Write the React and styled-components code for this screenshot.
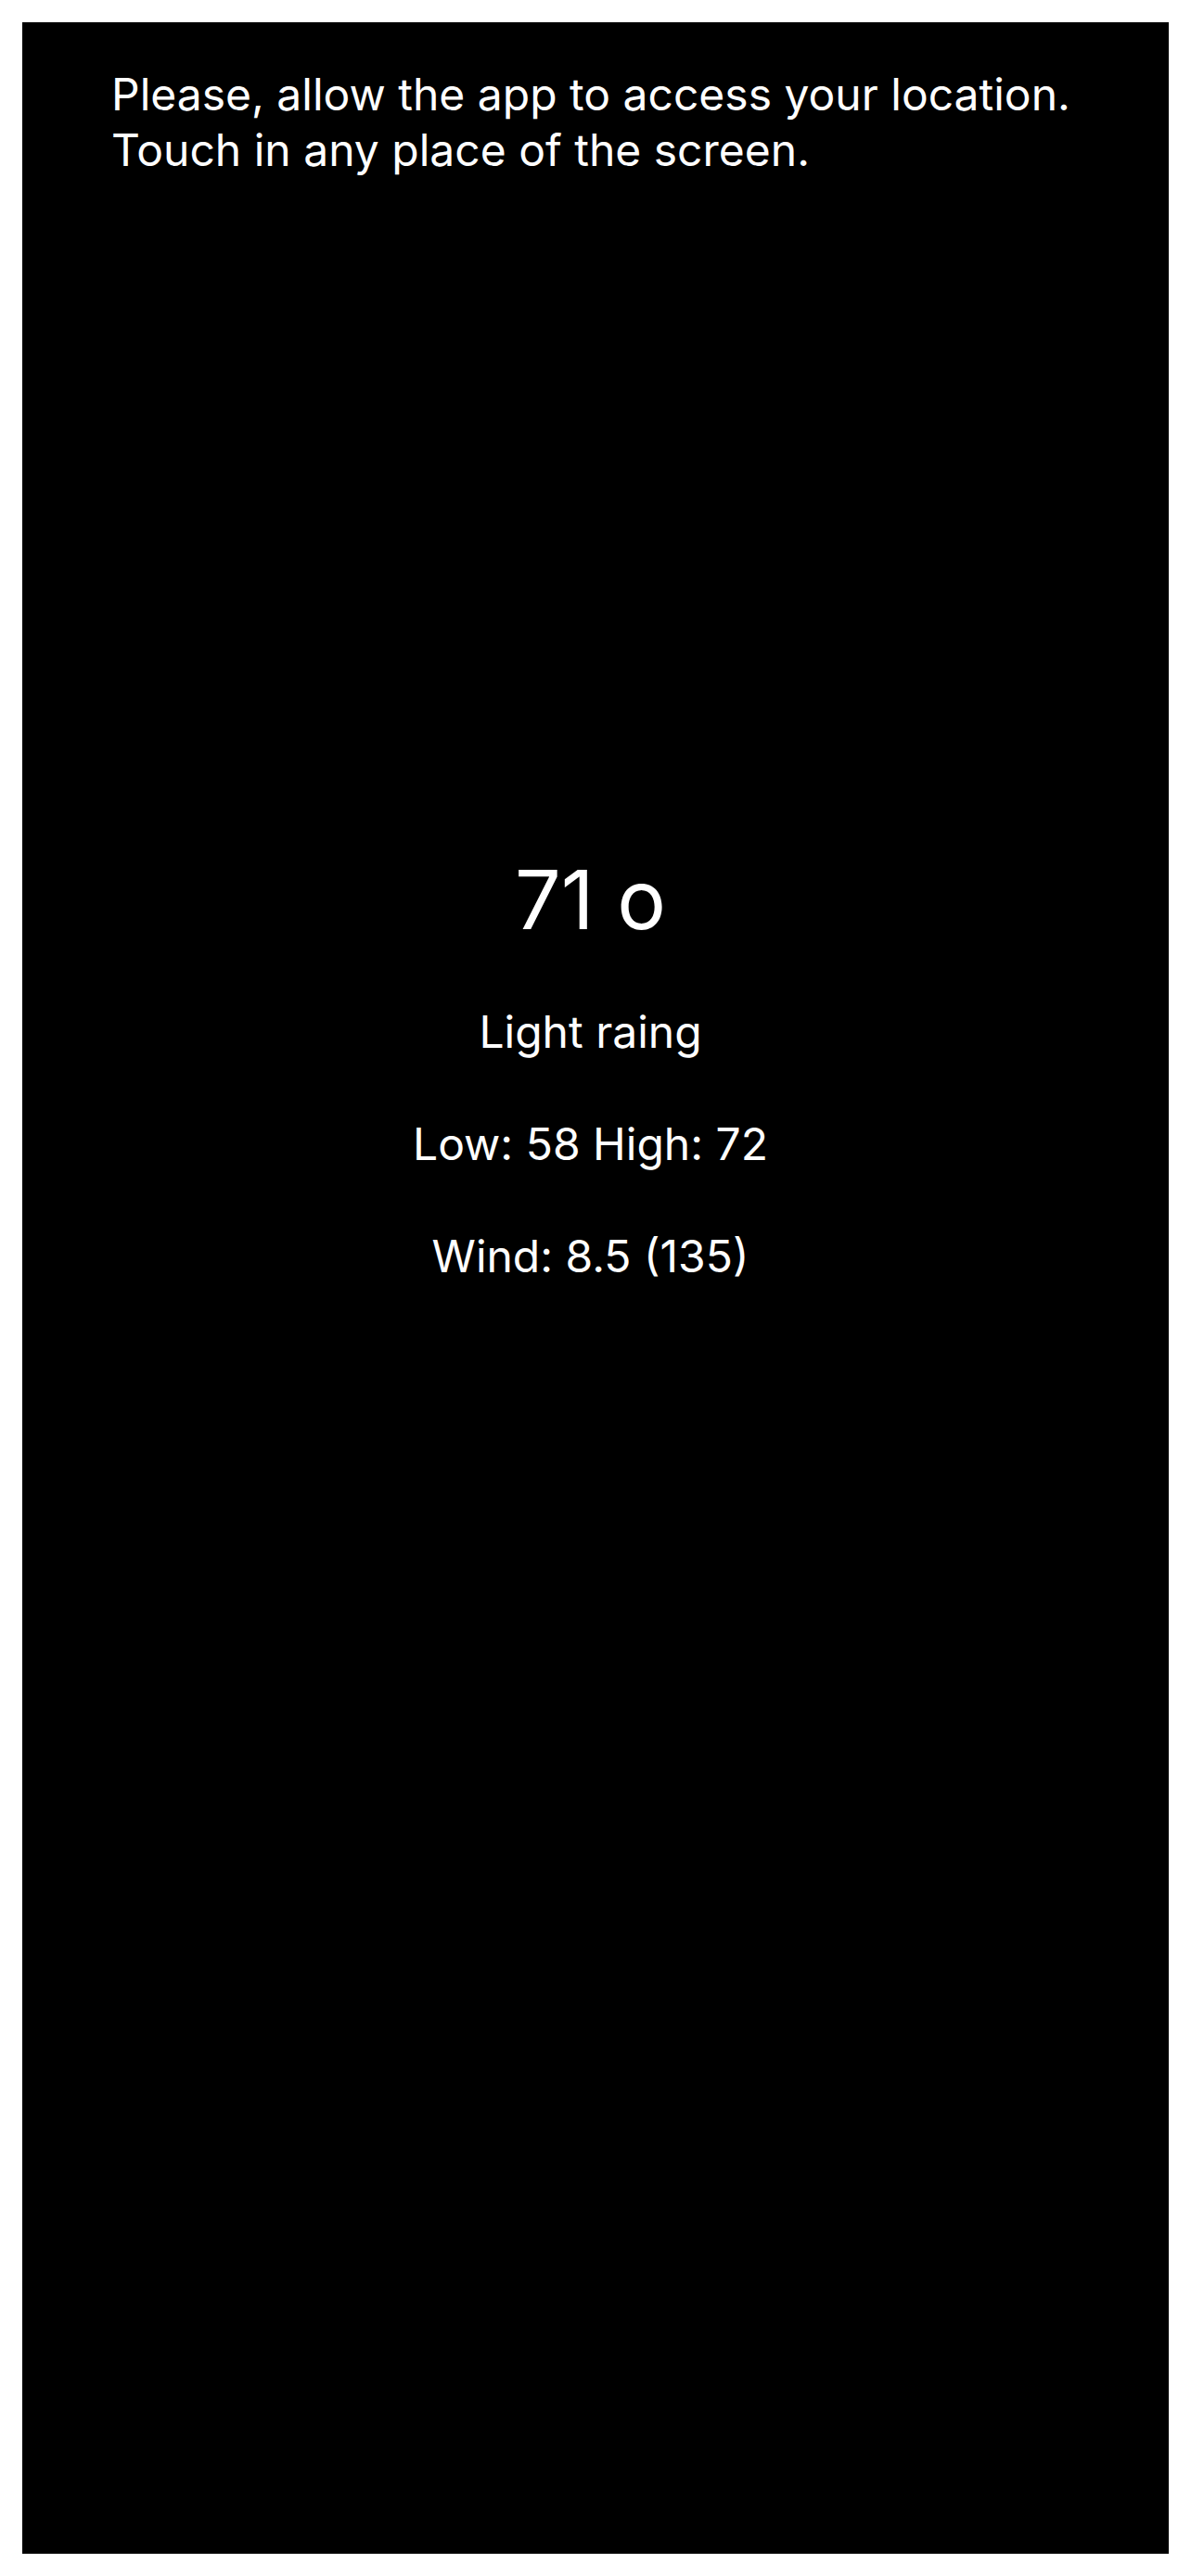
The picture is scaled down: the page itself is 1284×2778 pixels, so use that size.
import React from "react";
import styled, { createGlobalStyle } from "styled-components";

const GlobalStyle = createGlobalStyle`
  html, body {
    margin: 0;
    padding: 0;
    background: #ffffff;
  }
  body {
    font-family: Inter, "Noto Sans", sans-serif;
  }
`;

const Page = styled.div`
  padding: 24px;
  width: 1284px;
  height: 2778px;
  box-sizing: border-box;
`;

const Screen = styled.div`
  background: #000000;
  color: #ffffff;
  height: 100%;
  display: flex;
  flex-direction: column;
  padding: 48px 40px 0 96px;
  box-sizing: border-box;
`;

const Notice = styled.p`
  margin: 0;
  font-size: 48px;
  line-height: 60px;
  font-weight: 400;
`;

const Weather = styled.div`
  margin-top: 723px;
  display: flex;
  flex-direction: column;
  align-items: center;
  padding-right: 67px;
`;

const Temperature = styled.div`
  font-size: 88px;
  line-height: 110px;
`;

const Detail = styled.div`
  font-size: 48px;
  line-height: 60px;
  margin-top: ${(props) => props.gap || 61}px;
`;

const weather = {
  temp: 71,
  description: "Light raing",
  low: 58,
  high: 72,
  windSpeed: 8.5,
  windDeg: 135,
};

const App = () => {
  return (
    <Page>
      <GlobalStyle />
      <Screen>
        <Notice>
          Please, allow the app to access your location.
          <br />
          Touch in any place of the screen.
        </Notice>
        <Weather>
          <Temperature>{weather.temp} o</Temperature>
          <Detail gap={58}>{weather.description}</Detail>
          <Detail>
            Low: {weather.low} High: {weather.high}
          </Detail>
          <Detail>
            Wind: {weather.windSpeed} ({weather.windDeg})
          </Detail>
        </Weather>
      </Screen>
    </Page>
  );
};

export default App;
